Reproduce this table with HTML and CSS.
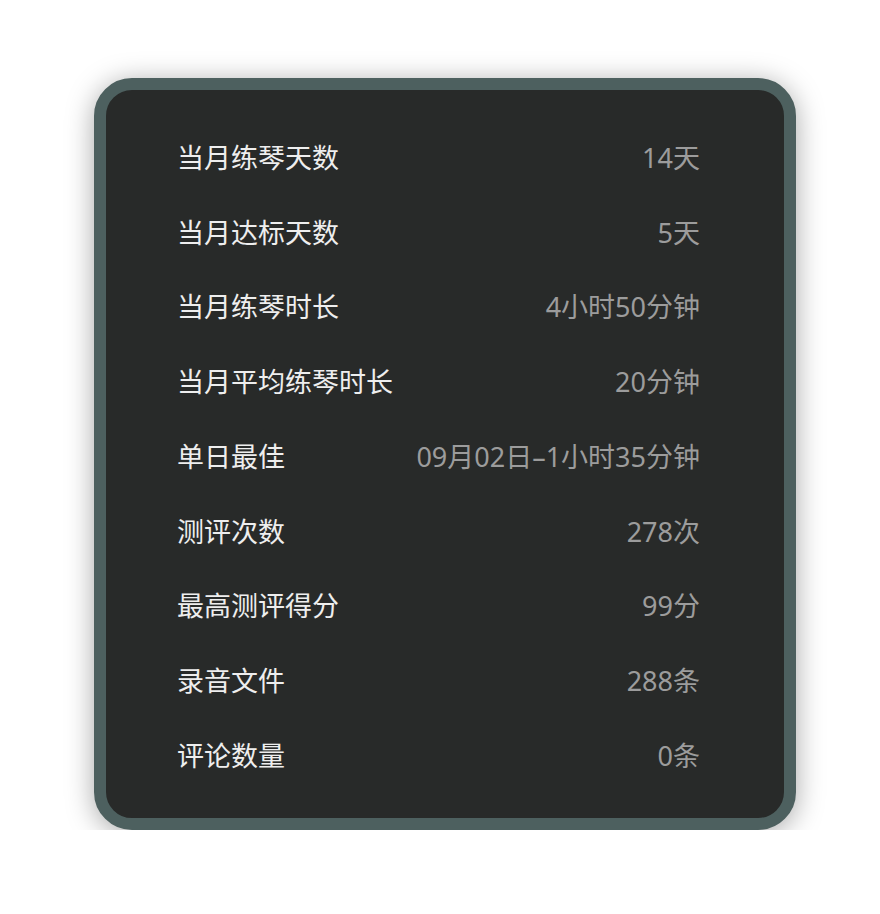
FILE: index.html
```html
<!DOCTYPE html>
<html lang="zh">
<head>
<meta charset="utf-8">
<link rel="stylesheet" href="styles.css">
</head>
<body>
<div class="card">
  <div class="list">
    <div class="row"><span class="label">当月练琴天数</span><span class="value">14天</span></div>
    <div class="row"><span class="label">当月达标天数</span><span class="value">5天</span></div>
    <div class="row"><span class="label">当月练琴时长</span><span class="value">4小时50分钟</span></div>
    <div class="row"><span class="label">当月平均练琴时长</span><span class="value">20分钟</span></div>
    <div class="row"><span class="label">单日最佳</span><span class="value">09月02日–1小时35分钟</span></div>
    <div class="row"><span class="label">测评次数</span><span class="value">278次</span></div>
    <div class="row"><span class="label">最高测评得分</span><span class="value">99分</span></div>
    <div class="row"><span class="label">录音文件</span><span class="value">288条</span></div>
    <div class="row"><span class="label">评论数量</span><span class="value">0条</span></div>
  </div>
</div>
</body>
</html>
```

FILE: styles.css
```css
html, body {
  margin: 0;
  padding: 0;
  background: #ffffff;
}
body {
  padding: 78px 0 0 94px;
  font-family: "Noto Sans", "Noto Sans CJK SC", sans-serif;
}
.card {
  box-sizing: border-box;
  width: 702px;
  height: 752px;
  border: 12px solid #4d605f;
  border-radius: 38px;
  background: #282a29;
  box-shadow: 0 4px 28px rgba(0, 0, 0, 0.35);
}
.list {
  padding: 29px 84px 0 71px;
}
.row {
  height: 74.75px;
  display: flex;
  align-items: center;
  justify-content: space-between;
  font-size: 27px;
}
.label {
  color: #eeeeee;
}
.value {
  color: #9c9c9c;
}
```
